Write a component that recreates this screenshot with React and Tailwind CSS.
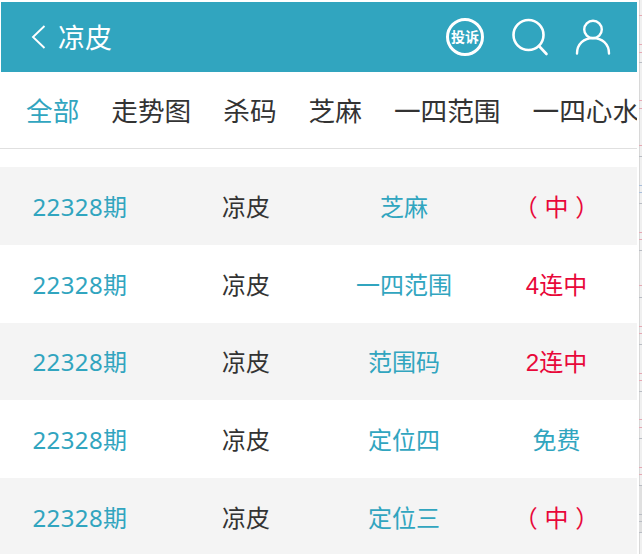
import React from 'react';

const tabs = ['全部', '走势图', '杀码', '芝麻', '一四范围', '一四心水'];

const rows = [
  { issue: '22328期', type: '芝麻', result: '（ 中 ）', color: 'text-[#e8083a]' },
  { issue: '22328期', type: '一四范围', result: '4连中', color: 'text-[#e8083a]' },
  { issue: '22328期', type: '范围码', result: '2连中', color: 'text-[#e8083a]' },
  { issue: '22328期', type: '定位四', result: '免费', color: 'text-[#31a5bf]' },
  { issue: '22328期', type: '定位三', result: '（ 中 ）', color: 'text-[#e8083a]' },
];

// ruler marks along the right edge of the screenshot
const pink = [15, 44, 52, 100, 108, 145, 232, 239, 285, 326, 333, 373, 380, 419, 427, 467, 474];
const grey = [62, 156, 203, 250, 297, 344, 391, 438, 485, 514, 521, 532];
const blue = [185, 192];

export default function App() {
  return (
    <div className="flex h-[554px] w-[642px] overflow-hidden bg-white font-['Liberation_Sans','Noto_Sans_CJK_SC',sans-serif]">
      <div className="w-[637px] shrink-0 pt-[2px]">
        {/* Header */}
        <header className="ml-px flex h-[70px] items-center bg-[#31a5bf] text-white">
          <svg width="16" height="24" viewBox="0 0 16 24" fill="none" stroke="white" strokeWidth="1.9" className="ml-[29px]">
            <path d="M14.5 1 L3 12 L14.5 23" />
          </svg>
          <h1 className="ml-[12px] pt-[4px] text-[27px] font-normal">凉皮</h1>
          <div className="ml-auto mr-[26px] flex items-center">
            <div className="flex h-[38px] w-[38px] items-center justify-center rounded-full border-[3px] border-white text-[14px] font-bold whitespace-nowrap">
              投诉
            </div>
            <svg width="38" height="38" viewBox="0 0 38 38" fill="none" stroke="white" strokeWidth="2.6" strokeLinecap="round" className="ml-[27px]">
              <circle cx="17.5" cy="17" r="15" />
              <path d="M28 28 L35.5 36" />
            </svg>
            <svg width="36" height="36" viewBox="0 0 36 36" fill="none" stroke="white" strokeWidth="2.4" strokeLinecap="round" className="ml-[26px]">
              <circle cx="18" cy="10.5" r="8.8" />
              <path d="M2 34.5 C2 25 9 19 18 19 C27 19 34 25 34 34.5" />
            </svg>
          </div>
        </header>

        {/* Tabs */}
        <nav className="flex h-[77px] items-center gap-[32px] overflow-hidden border-b border-[#e0e0e0] pl-[26px] pt-[4px] text-[26.67px] whitespace-nowrap text-[#333]">
          {tabs.map((tab, i) => (
            <span key={tab} className={i === 0 ? 'text-[#31a5bf]' : ''}>
              {tab}
            </span>
          ))}
        </nav>

        {/* List */}
        <div className="mt-[18px]">
          {rows.map((row, i) => (
            <div
              key={i}
              className={`grid h-[77.75px] grid-cols-[160px_172px_144px_161px] items-center pt-[4px] text-center text-[24px] ${i % 2 === 0 ? 'bg-[#f4f4f4]' : 'bg-white'}`}
            >
              <span className="pb-[2px] font-['Noto_Sans','Noto_Sans_CJK_SC',sans-serif] tracking-[0.4px] text-[#31a5bf]">{row.issue}</span>
              <span className="text-[#333]">凉皮</span>
              <span className="text-[#31a5bf]">{row.type}</span>
              <span className={row.color}>{row.result}</span>
            </div>
          ))}
        </div>
      </div>

      <svg width="3" height="554" className="ml-[2px] shrink-0 bg-[#f0f0f0]">
        <rect x="0" y="0" width="1" height="554" fill="#d8d8d8" />
        <rect x="0" y="485" width="3" height="48" fill="#e0e0e0" />
        {pink.map((y) => <rect key={y} x="0" y={y} width="3" height="1" fill="#e6a9b4" />)}
        {grey.map((y) => <rect key={y} x="0" y={y} width="3" height="1" fill="#b9bdc4" />)}
        {blue.map((y) => <rect key={y} x="0" y={y} width="3" height="1" fill="#a9bfdc" />)}
      </svg>
    </div>
  );
}
